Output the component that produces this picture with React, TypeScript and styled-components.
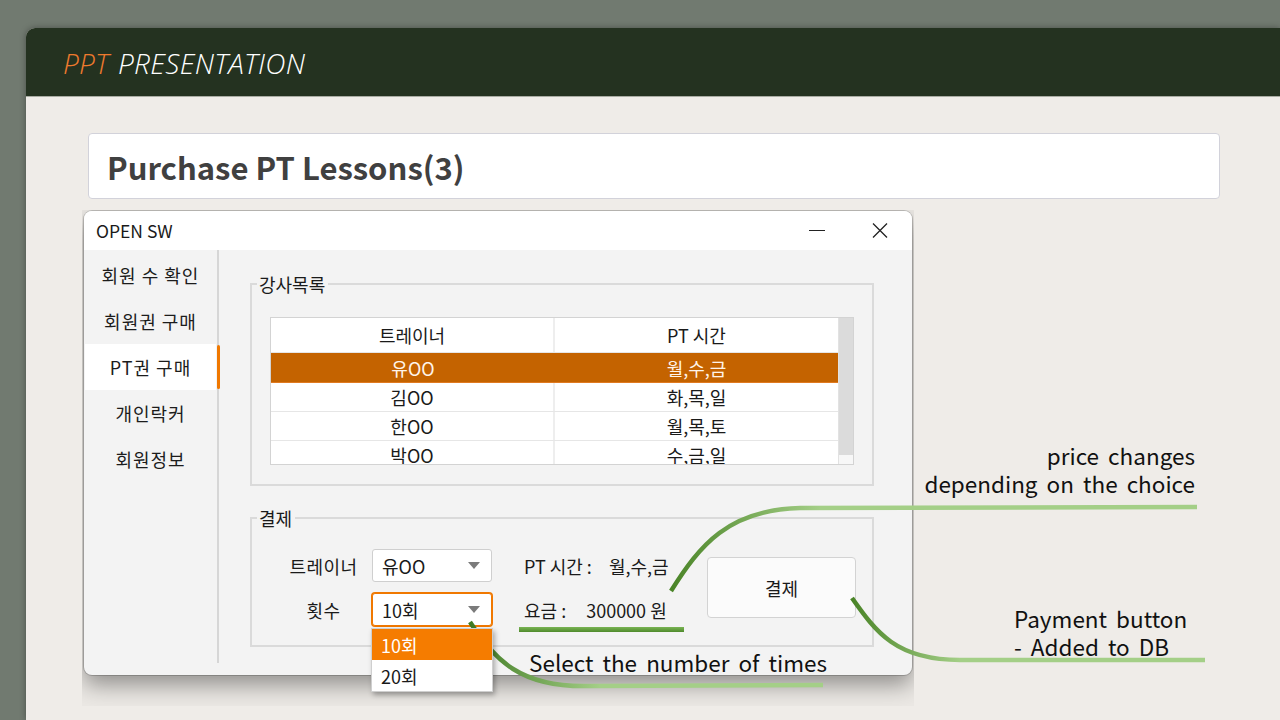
import React from "react";
import styled, { createGlobalStyle } from "styled-components";

const GlobalStyle = createGlobalStyle`
  html, body { margin: 0; padding: 0; }
  body {
    background: #717a70;
    font-family: "Noto Sans CJK KR", "Noto Sans", sans-serif;
    color: #1a1a1a;
  }
  * { box-sizing: border-box; }
`;

const Stage = styled.div`
  position: relative;
  width: 1280px;
  height: 720px;
  overflow: hidden;
  padding: 28px 0 0 26px;
  background: #717a70;
`;

const Slide = styled.div`
  height: 692px;
  background: #efece8;
  border-top-left-radius: 9px;
  overflow: hidden;
  box-shadow: 0 0 6px rgba(0, 0, 0, 0.35);
`;

const Header = styled.header`
  height: 69px;
  background: #243220;
  border-bottom: 1px solid #a9aca3;
  display: flex;
  align-items: center;
  padding-left: 37px;
  padding-top: 2px;
  font-family: "Open Sans", "Noto Sans", sans-serif;
  font-style: italic;
  font-weight: 300;
  font-size: 28px;
  letter-spacing: 0.3px;
  color: #ffffff;
`;

const Accent = styled.span`
  color: #ee7a2e;
  margin-right: 9px;
`;

const Content = styled.main`
  padding: 36px 0 0 62px;
`;

const TitleBox = styled.div`
  width: 1132px;
  height: 66px;
  background: #ffffff;
  border: 1px solid #d2d2da;
  border-radius: 4px;
  display: flex;
  align-items: center;
  padding-left: 18px;
  font-family: "Noto Sans CJK KR", "Noto Sans", sans-serif;
  font-weight: 700;
  font-size: 31px;
  color: #404040;
`;

const Shot = styled.div`
  margin: 11px 0 0 -6px;
  width: 832px;
  height: 496px;
  overflow: hidden;
  padding: 1px 2px 0;
  background: #ebe8e4;
`;

const Win = styled.div`
  width: 828px;
  height: 464px;
  border-radius: 8px;
  background: #f3f3f3;
  box-shadow: 0 0 0 1px rgba(0, 0, 0, 0.18), 0 10px 22px rgba(0, 0, 0, 0.38);
  display: flex;
  flex-direction: column;
  font-size: 18px;
  line-height: 22px;
`;

const TitleBar = styled.div`
  height: 39px;
  background: #ffffff;
  border-radius: 8px 8px 0 0;
  display: flex;
  align-items: center;
  padding-left: 12px;
  font-size: 17.5px;
  color: #1a1a1a;
`;

const TitleText = styled.span`
  flex: 1;
`;

const Ctrl = styled.div`
  width: 63px;
  height: 39px;
  display: flex;
  align-items: center;
  justify-content: center;
`;

const Controls = styled.div`
  display: flex;
  margin-right: 1px;
`;

const Body = styled.div`
  flex: 1;
  display: flex;
`;

const Sidebar = styled.nav`
  width: 135px;
  height: 413px;
  border-right: 2px solid #d6d6d6;
  padding-top: 2px;
  display: flex;
  flex-direction: column;
`;

const NavItem = styled.div<{ $active?: boolean }>`
  position: relative;
  height: 46px;
  display: flex;
  align-items: center;
  justify-content: center;
  font-size: 18px;
  letter-spacing: 1px;
  color: #1c1c1c;
  margin: 0 1px;
  background: ${(p) => (p.$active ? "#ffffff" : "transparent")};
  &::after {
    content: "";
    display: ${(p) => (p.$active ? "block" : "none")};
    position: absolute;
    right: -4px;
    top: 1px;
    bottom: 1px;
    width: 3px;
    border-radius: 2px;
    background: #f07800;
  }
`;

const Main = styled.div`
  flex: 1;
  padding: 23px 0 0 31px;
`;

const Group = styled.fieldset<{ $gap?: number }>`
  width: 624px;
  margin: ${(p) => p.$gap ?? 0}px 0 0 0;
  border: 2px solid #dadada;
  padding: 0 18px 19px;
  min-width: 0;
`;

const Legend = styled.legend`
  margin-left: -13px;
  padding: 0 3px 0 2px;
  font-size: 18px;
  line-height: 22px;
  color: #1a1a1a;
`;

const Table = styled.div`
  margin-top: 22px;
  width: 584px;
  height: 148px;
  border: 1px solid #d3d3d3;
  display: flex;
  overflow: hidden;
  background: #ffffff;
`;

const Rows = styled.div`
  flex: 1;
  display: flex;
  flex-direction: column;
`;

const Row = styled.div<{ $h: number; $sel?: boolean }>`
  flex: 0 0 ${(p) => p.$h}px;
  display: grid;
  grid-template-columns: 284px 1fr;
  border-bottom: 1px solid ${(p) => (p.$sel ? "#e07a20" : "#e6e6e6")};
  background: ${(p) => (p.$sel ? "#c46300" : "#ffffff")};
  color: ${(p) => (p.$sel ? "#fff4ea" : "#1a1a1a")};
`;

const Cell = styled.div<{ $first?: boolean }>`
  display: flex;
  align-items: center;
  justify-content: center;
  font-size: 18px;
  line-height: 22px;
  border-right: ${(p) => (p.$first ? "2px solid #eeeeee" : "none")};
`;

const Scroll = styled.div`
  width: 15px;
  display: flex;
  flex-direction: column;
  border-left: 1px solid #e2e2e2;
`;

const Thumb = styled.div`
  flex: 1;
  background: #dbdbdb;
`;

const Corner = styled.div`
  height: 9px;
  background: #f7f7f7;
`;

const PayRow = styled.div`
  margin-top: 20px;
  display: flex;
  align-items: center;
`;

const FormGrid = styled.div`
  flex-shrink: 0;
  display: grid;
  grid-template-columns: 91px 120px;
  grid-auto-rows: 33px;
  column-gap: 11px;
  row-gap: 11px;
  align-items: center;
`;

const FieldLabel = styled.div`
  text-align: center;
  padding-left: 16px;
  letter-spacing: 0.5px;
`;

const Combo = styled.div<{ $focus?: boolean }>`
  position: relative;
  height: 33px;
  background: #ffffff;
  border: 1px solid ${(p) => (p.$focus ? "#f07800" : "#cfcfcf")};
  box-shadow: ${(p) => (p.$focus ? "0 0 0 1px #f07800" : "none")};
  border-radius: 3px;
  display: flex;
  align-items: center;
  padding: 0 10px 0 9px;
`;

const ComboText = styled.span`
  flex: 1;
`;

const Arrow = styled.span`
  width: 0;
  height: 0;
  border-left: 6px solid transparent;
  border-right: 6px solid transparent;
  border-top: 7px solid #7b7b7b;
  margin-right: 1px;
`;

const DropList = styled.div`
  position: absolute;
  left: -2px;
  top: 34px;
  width: 122px;
  background: #ffffff;
  border: 1px solid #cfcfcf;
  box-shadow: 2px 3px 5px rgba(0, 0, 0, 0.3);
  z-index: 2;
`;

const DropItem = styled.div<{ $sel?: boolean }>`
  height: 31px;
  display: flex;
  align-items: center;
  padding-left: 9px;
  background: ${(p) => (p.$sel ? "#f57c00" : "#ffffff")};
  color: ${(p) => (p.$sel ? "#ffffff" : "#1a1a1a")};
`;

const Info = styled.div`
  flex-shrink: 0;
  width: 183px;
  margin-left: 32px;
  display: grid;
  grid-auto-rows: 33px;
  row-gap: 11px;
  align-items: center;
`;

const InfoLine = styled.div`
  display: flex;
  white-space: nowrap;
`;

const InfoValue = styled.span<{ $gap: number }>`
  margin-left: ${(p) => p.$gap}px;
`;

const PayButton = styled.div`
  flex-shrink: 0;
  width: 149px;
  height: 61px;
  background: #fbfbfb;
  border: 1px solid #d3d3d3;
  border-radius: 4px;
  display: flex;
  align-items: center;
  justify-content: center;
`;

const Overlay = styled.svg`
  position: absolute;
  left: 0;
  top: 0;
  pointer-events: none;
`;

const Note = styled.div<{ $x: number; $y: number; $right?: boolean }>`
  position: absolute;
  ${(p) => (p.$right ? `right: ${1280 - p.$x}px;` : `left: ${p.$x}px;`)}
  top: ${(p) => p.$y}px;
  display: flex;
  flex-direction: column;
  align-items: ${(p) => (p.$right ? "flex-end" : "flex-start")};
  font-family: "Noto Sans CJK KR", "Noto Sans", sans-serif;
  font-size: 22.5px;
  word-spacing: 4px;
  color: #111111;
  white-space: nowrap;
`;

const NoteLine = styled.span`
  height: 28px;
  line-height: 28px;
`;

const trainers = [
  { name: "유OO", time: "월,수,금" },
  { name: "김OO", time: "화,목,일" },
  { name: "한OO", time: "월,목,토" },
  { name: "박OO", time: "수,금,일" },
];

const navItems = ["회원 수 확인", "회원권 구매", "PT권 구매", "개인락커", "회원정보"];

export default function App() {
  return (
    <>
      <GlobalStyle />
      <Stage>
        <Slide>
          <Header>
            <Accent>PPT</Accent>PRESENTATION
          </Header>
          <Content>
            <TitleBox>Purchase PT Lessons(3)</TitleBox>
            <Shot>
              <Win>
                <TitleBar>
                  <TitleText>OPEN SW</TitleText>
                  <Controls>
                    <Ctrl>
                      <svg width="16" height="16" viewBox="0 0 16 16">
                        <line x1="0" y1="7.5" x2="16" y2="7.5" stroke="#222" strokeWidth="1.2" />
                      </svg>
                    </Ctrl>
                    <Ctrl>
                      <svg width="16" height="16" viewBox="0 0 16 16">
                        <path d="M1 0.5 L15 14.5 M15 0.5 L1 14.5" stroke="#222" strokeWidth="1.3" fill="none" />
                      </svg>
                    </Ctrl>
                  </Controls>
                </TitleBar>
                <Body>
                  <Sidebar>
                    {navItems.map((n) => (
                      <NavItem key={n} $active={n === "PT권 구매"}>
                        {n}
                      </NavItem>
                    ))}
                  </Sidebar>
                  <Main>
                    <Group>
                      <Legend>강사목록</Legend>
                      <Table>
                        <Rows>
                          <Row $h={35}>
                            <Cell $first>트레이너</Cell>
                            <Cell>PT 시간</Cell>
                          </Row>
                          {trainers.map((t, i) => (
                            <Row key={t.name} $h={i === 0 ? 30 : 29} $sel={i === 0}>
                              <Cell $first={i !== 0}>{t.name}</Cell>
                              <Cell>{t.time}</Cell>
                            </Row>
                          ))}
                        </Rows>
                        <Scroll>
                          <Thumb />
                          <Corner />
                        </Scroll>
                      </Table>
                    </Group>
                    <Group $gap={21}>
                      <Legend>결제</Legend>
                      <PayRow>
                        <FormGrid>
                          <FieldLabel>트레이너</FieldLabel>
                          <Combo>
                            <ComboText>유OO</ComboText>
                            <Arrow />
                          </Combo>
                          <FieldLabel>횟수</FieldLabel>
                          <Combo $focus>
                            <ComboText>10회</ComboText>
                            <Arrow />
                            <DropList>
                              <DropItem $sel>10회</DropItem>
                              <DropItem>20회</DropItem>
                            </DropList>
                          </Combo>
                        </FormGrid>
                        <Info>
                          <InfoLine>
                            PT 시간 :<InfoValue $gap={17}>월,수,금</InfoValue>
                          </InfoLine>
                          <InfoLine>
                            요금 :<InfoValue $gap={20}>300000 원</InfoValue>
                          </InfoLine>
                        </Info>
                        <PayButton>결제</PayButton>
                      </PayRow>
                    </Group>
                  </Main>
                </Body>
              </Win>
            </Shot>
          </Content>
        </Slide>

        <Overlay width="1280" height="720" viewBox="0 0 1280 720">
          <defs>
            <linearGradient id="gA" gradientUnits="userSpaceOnUse" x1="671" y1="0" x2="820" y2="0">
              <stop offset="0" stopColor="#4a8427" />
              <stop offset="1" stopColor="#a4cf87" />
            </linearGradient>
            <linearGradient id="gB" gradientUnits="userSpaceOnUse" x1="470" y1="0" x2="600" y2="0">
              <stop offset="0" stopColor="#3f7a22" />
              <stop offset="1" stopColor="#a4cf87" />
            </linearGradient>
            <linearGradient id="gC" gradientUnits="userSpaceOnUse" x1="852" y1="0" x2="960" y2="0">
              <stop offset="0" stopColor="#4a8427" />
              <stop offset="1" stopColor="#a4cf87" />
            </linearGradient>
            <linearGradient id="gU" x1="0" y1="0" x2="0" y2="1">
              <stop offset="0" stopColor="#7ab454" />
              <stop offset="1" stopColor="#4f8a2c" />
            </linearGradient>
          </defs>
          <path d="M671 591 C700 545 728 510 800 508 L1197 507" stroke="url(#gA)" strokeWidth="4.5" fill="none" />
          <path d="M470 622 C495 660 520 688 590 686 L823 685" stroke="url(#gB)" strokeWidth="4.5" fill="none" />
          <path d="M852 598 C876 632 896 660 960 660 L1205 660" stroke="url(#gC)" strokeWidth="4.5" fill="none" />
          <rect x="519" y="627" width="165" height="5" fill="url(#gU)" />
        </Overlay>

        <Note $x={1195} $y={441} $right>
          <NoteLine>price changes</NoteLine>
          <NoteLine>depending on the choice</NoteLine>
        </Note>
        <Note $x={1014} $y={604}>
          <NoteLine>Payment button</NoteLine>
          <NoteLine>- Added to DB</NoteLine>
        </Note>
        <Note $x={529} $y={648}>
          <NoteLine>Select the number of times</NoteLine>
        </Note>
      </Stage>
    </>
  );
}
